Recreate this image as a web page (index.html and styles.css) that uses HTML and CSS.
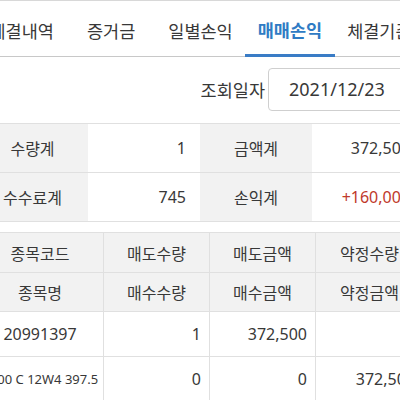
FILE: index.html
```html
<!DOCTYPE html>
<html lang="ko">
<head>
<meta charset="utf-8">
<link rel="stylesheet" href="styles.css">
</head>
<body>
<div class="page">
  <nav class="tabs">
    <div class="tab">체결내역</div>
    <div class="tab">증거금</div>
    <div class="tab">일별손익</div>
    <div class="tab active">매매손익</div>
    <div class="tab">체결기준</div>
  </nav>
  <div class="date-row">
    <span class="date-label">조회일자</span>
    <div class="date-input">2021/12/23</div>
  </div>
  <div class="summary">
    <div class="s-label">수량계</div>
    <div class="s-value">1</div>
    <div class="s-label">금액계</div>
    <div class="s-value">372,500</div>
    <div class="s-label">수수료계</div>
    <div class="s-value">745</div>
    <div class="s-label">손익계</div>
    <div class="s-value red">+160,000</div>
  </div>
  <div class="detail">
    <div class="h">종목코드</div>
    <div class="h">매도수량</div>
    <div class="h">매도금액</div>
    <div class="h">약정수량</div>
    <div class="h">종목명</div>
    <div class="h">매수수량</div>
    <div class="h">매수금액</div>
    <div class="h">약정금액</div>
    <div class="d center">20991397</div>
    <div class="d">1</div>
    <div class="d">372,500</div>
    <div class="d"></div>
    <div class="d center small">K200 C 12W4 397.5</div>
    <div class="d">0</div>
    <div class="d">0</div>
    <div class="d">372,500</div>
  </div>
</div>
</body>
</html>
```
FILE: styles.css
```css
html, body {
  margin: 0;
  padding: 0;
  background: #fff;
  overflow: hidden;
}
body {
  font-family: "Noto Sans", "Noto Sans CJK KR", sans-serif;
  color: #383838;
}
.page {
  width: 447px;
  margin-left: -23px;
}
.tabs {
  display: flex;
  border-top: 1px solid #d8d8d8;
  border-bottom: 1px solid #c8c8c8;
  box-sizing: border-box;
  height: 57px;
}
.tab {
  flex: 1;
  display: flex;
  align-items: center;
  justify-content: center;
  font-size: 17.5px;
  padding-top: 3px;
  box-sizing: border-box;
  white-space: nowrap;
}
.tab.active {
  color: #2f7bc4;
  font-weight: 700;
  border-bottom: 3px solid #3a7cc6;
  margin-bottom: -1px;
  padding-top: 4px;
}
.date-row {
  height: 66px;
  display: flex;
  align-items: center;
  justify-content: flex-end;
  gap: 3px;
  padding-right: 10px;
  box-sizing: border-box;
}
.date-label {
  font-size: 17.5px;
  margin-top: -2px;
}
.date-input {
  width: 146px;
  height: 43px;
  box-sizing: border-box;
  border: 1px solid #cfcfcf;
  border-radius: 4px;
  padding-left: 20px;
  display: flex;
  align-items: center;
  font-size: 18px;
  margin-top: -2px;
}
.summary {
  display: grid;
  grid-template-columns: 111px 112px 112px 112px;
  grid-auto-rows: 49px;
  border-top: 1px solid #e0e0e0;
}
.s-label, .s-value {
  display: flex;
  align-items: center;
  border-bottom: 1px solid #e0e0e0;
  font-size: 16px;
  box-sizing: border-box;
}
.s-label {
  background: #f2f2f2;
  justify-content: center;
}
.s-value {
  justify-content: flex-end;
  padding-right: 14px;
}
.red {
  color: #c0392b;
}
.detail {
  margin-top: 10px;
  display: grid;
  grid-template-columns: 127px 106px 106px 108px;
  grid-template-rows: 40px 39px 45px 45px;
  border-top: 1px solid #e0e0e0;
}
.h, .d {
  display: flex;
  align-items: center;
  border-bottom: 1px solid #e0e0e0;
  border-right: 1px solid #e0e0e0;
  box-sizing: border-box;
  font-size: 16px;
  white-space: nowrap;
}
.h {
  background: #f2f2f2;
  justify-content: center;
}
.d {
  justify-content: flex-end;
  padding-right: 8px;
}
.d.center {
  justify-content: center;
  padding-right: 0;
}
.d.small {
  font-size: 13px;
}
```
